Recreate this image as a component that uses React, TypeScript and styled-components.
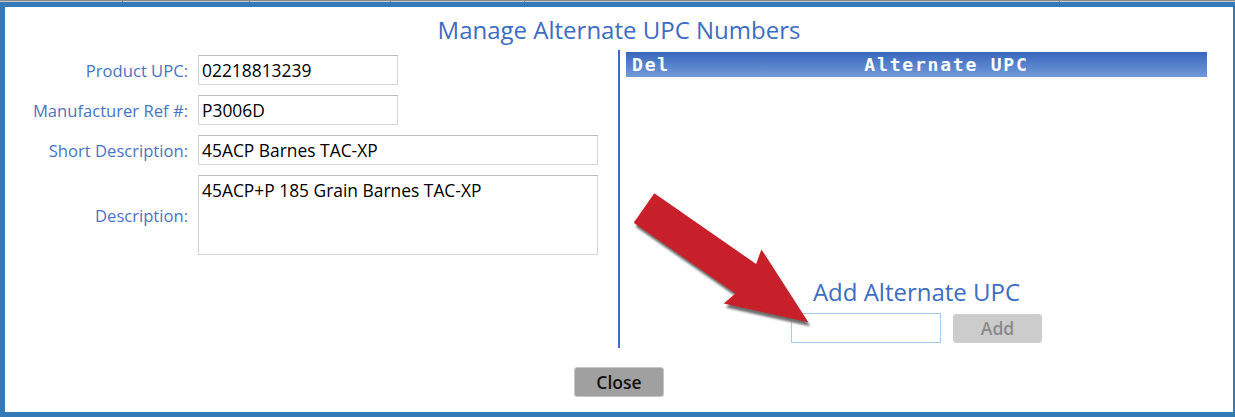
import React from 'react';
import styled, { createGlobalStyle } from 'styled-components';

const blue = '#337ab7';
const textBlue = '#3c6dc2';

const GlobalStyle = createGlobalStyle`
    html, body {
        margin: 0;
        padding: 0;
        background: #ffffff;
    }
    body {
        font-family: "Open Sans", "Noto Sans", sans-serif;
    }
`;

const Page = styled.div`
    position: relative;
    width: 1235px;
    height: 417px;
    overflow: hidden;
`;

const TopStrip = styled.div`
    display: flex;
    height: 2px;
    background: #c8c8c8;
    border-top: 1px solid #8a8a8a;
    box-sizing: border-box;
`;

const StripCell = styled.div<{ $w: number }>`
    width: ${p => p.$w}px;
    flex: none;
    border-right: 1px solid #7a7a7a;
`;

const Dialog = styled.div`
    box-sizing: border-box;
    width: 1235px;
    height: 415px;
    border-style: solid;
    border-color: ${blue};
    border-width: 5px 2px 5px 5px;
    margin-right: 1px;
    display: flex;
    flex-direction: column;
`;

const Title = styled.h1`
    margin: 0;
    box-sizing: border-box;
    height: 43px;
    padding-top: 8px;
    font-size: 24px;
    line-height: 30px;
    font-weight: 400;
    text-align: center;
    color: ${textBlue};
`;

const Main = styled.div`
    display: flex;
    height: 298px;
`;

const LeftColumn = styled.div`
    width: 613px;
    border-right: 2px solid #3c6bc2;
    padding-top: 5px;
`;

const Form = styled.div`
    display: grid;
    grid-template-columns: 183px auto;
    column-gap: 10px;
    row-gap: 10px;
    align-items: center;
`;

const Label = styled.label`
    text-align: right;
    font-size: 16.6px;
    color: #4a74c4;
`;

const Field = styled.div<{ $w: number; $h?: number }>`
    box-sizing: border-box;
    width: ${p => p.$w}px;
    height: ${p => p.$h ?? 30}px;
    border: 1px solid #d4d4d4;
    border-top-color: #bdbdbd;
    padding: 2px 3px 0;
    font-size: 17.4px;
    line-height: 24px;
    color: #000;
`;

const RightColumn = styled.div`
    width: 581px;
    margin-left: 6px;
    padding-top: 2px;
    display: flex;
    flex-direction: column;
`;

const GridHeader = styled.div`
    display: flex;
    height: 25px;
    background: linear-gradient(#3867bd, #7299d8);
    color: #fff;
    font-family: "DejaVu Sans Mono", "Liberation Mono", monospace;
    font-weight: bold;
    font-size: 18px;
    line-height: 25px;
    letter-spacing: 1.8px;
`;

const HeadCell = styled.div<{ $w?: number }>`
    ${p => (p.$w ? `width: ${p.$w}px; padding-left: 6px; box-sizing: border-box;` : 'flex: 1; text-align: center;')}
`;

const AddSection = styled.div`
    margin-top: auto;
    margin-bottom: 5px;
    display: flex;
    flex-direction: column;
    align-items: center;
`;

const AddTitle = styled.div`
    font-size: 24px;
    line-height: 30px;
    color: ${textBlue};
    margin-bottom: 6px;
`;

const AddRow = styled.div`
    display: flex;
    align-items: center;
    gap: 12px;
`;

const AddInput = styled.div`
    box-sizing: border-box;
    width: 150px;
    height: 30px;
    border: 1px solid #a9cbe8;
`;

const Button = styled.div<{ $disabled?: boolean }>`
    box-sizing: border-box;
    width: ${p => (p.$disabled ? 89 : 90)}px;
    height: ${p => (p.$disabled ? 29 : 30)}px;
    display: flex;
    align-items: center;
    justify-content: center;
    border-radius: 3px;
    border: 1px solid ${p => (p.$disabled ? '#cfcfcf' : '#c6c6c6')};
    background: ${p => (p.$disabled ? '#cccccc' : '#a0a0a0')};
    color: ${p => (p.$disabled ? '#8a8a8a' : '#111')};
    font-size: 17.5px;
    font-weight: 600;
`;

const Footer = styled.div`
    display: flex;
    justify-content: center;
    padding-top: 19px;
`;

const Overlay = styled.svg`
    position: absolute;
    left: 0;
    top: 0;
    pointer-events: none;
`;

// block arrow built along its own axis, then placed on the page
function arrowPoints() {
    const tx = 644, ty = 208;
    const ux = 0.821, uy = 0.571;
    const nx = -0.571, ny = 0.821;
    const local: [number, number][] = [
        [0, -18], [124, -18], [120, -33], [200, 0], [120, 33], [124, 18], [0, 18],
    ];
    return local
        .map(([a, b]) => `${(tx + a * ux + b * nx).toFixed(1)},${(ty + a * uy + b * ny).toFixed(1)}`)
        .join(' ');
}

function Arrow() {
    const pts = arrowPoints();
    return (
        <Overlay width={1235} height={417}>
            <defs>
                <filter id="soft" x="-10%" y="-10%" width="120%" height="120%">
                    <feGaussianBlur stdDeviation="0.8" />
                </filter>
            </defs>
            <polygon points={pts} fill="#6e6e6e" transform="translate(2 4)" filter="url(#soft)" />
            <polygon points={pts} fill="#c8202a" />
        </Overlay>
    );
}

const strip = [122, 126, 140, 133, 534, 180];

export default function App() {
    return (
        <Page>
            <GlobalStyle />
            <TopStrip>
                {strip.map((w, i) => <StripCell key={i} $w={w} />)}
            </TopStrip>
            <Dialog>
                <Title>Manage Alternate UPC Numbers</Title>
                <Main>
                    <LeftColumn>
                        <Form>
                            <Label>Product UPC:</Label>
                            <Field $w={200}>02218813239</Field>
                            <Label>Manufacturer Ref #:</Label>
                            <Field $w={200}>P3006D</Field>
                            <Label>Short Description:</Label>
                            <Field $w={400}>45ACP Barnes TAC-XP</Field>
                            <Label>Description:</Label>
                            <Field $w={400} $h={80}>45ACP+P 185 Grain Barnes TAC-XP</Field>
                        </Form>
                    </LeftColumn>
                    <RightColumn>
                        <GridHeader>
                            <HeadCell $w={60}>Del</HeadCell>
                            <HeadCell>Alternate UPC</HeadCell>
                        </GridHeader>
                        <AddSection>
                            <AddTitle>Add Alternate UPC</AddTitle>
                            <AddRow>
                                <AddInput />
                                <Button $disabled>Add</Button>
                            </AddRow>
                        </AddSection>
                    </RightColumn>
                </Main>
                <Footer>
                    <Button>Close</Button>
                </Footer>
            </Dialog>
            <Arrow />
        </Page>
    );
}
